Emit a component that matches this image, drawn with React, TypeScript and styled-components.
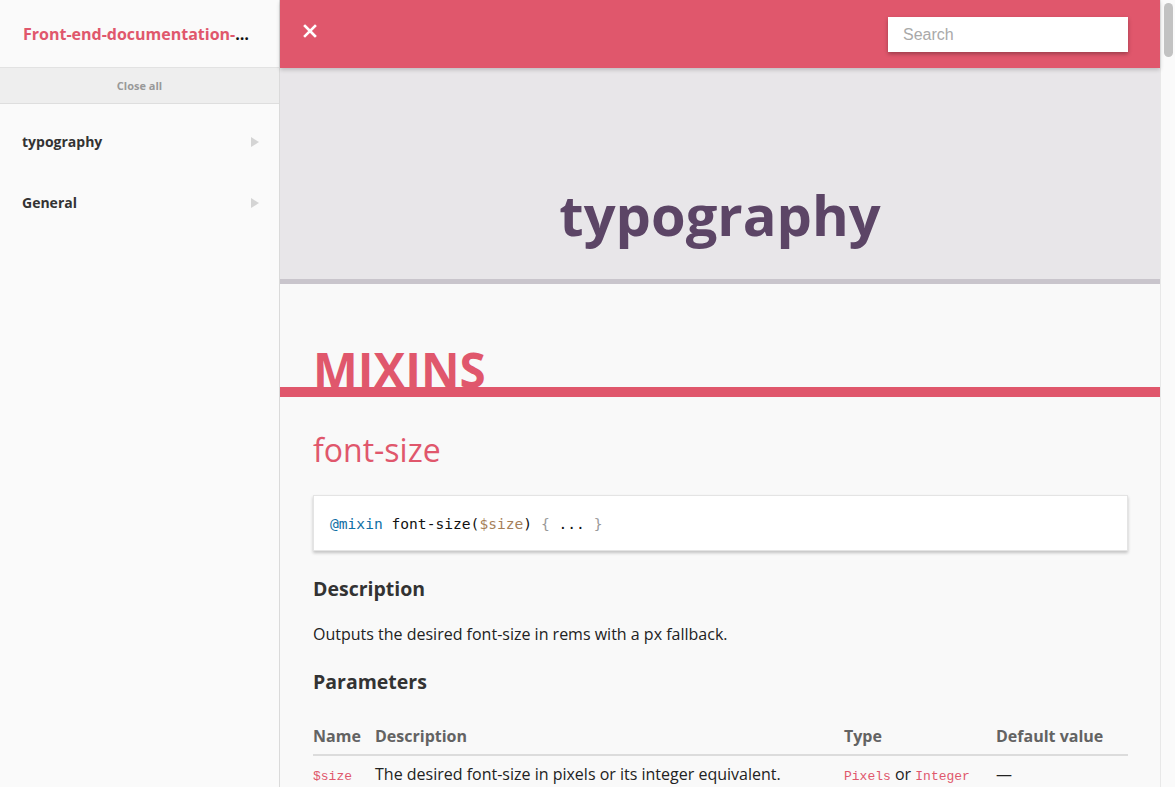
import * as React from 'react'
import styled, {createGlobalStyle} from 'styled-components'

const pink = '#e0576c'

const GlobalStyle = createGlobalStyle`
  html, body {
    margin: 0;
    padding: 0;
    height: 100%;
    overflow: hidden;
    background: #f9f9f9;
  }
  body {
    font-family: "Open Sans", "Noto Sans", sans-serif;
    color: #333;
  }
  * {
    box-sizing: border-box;
  }
`

const Layout = styled.div`
  display: flex;
  width: 1175px;
  height: 787px;
  overflow: hidden;
`

const Sidebar = styled.aside`
  width: 280px;
  flex-shrink: 0;
  background: #fafafa;
  border-right: 1px solid #dadada;
  display: flex;
  flex-direction: column;
`

const Brand = styled.header`
  height: 68px;
  padding: 0 24px 0 23px;
  border-bottom: 1px solid #e2e2e2;
  display: flex;
  align-items: center;
  font-size: 16px;
  font-weight: 700;
  color: #111;
  a {
    color: ${pink};
    text-decoration: none;
  }
`

const BrandText = styled.span`
  display: block;
  width: 100%;
  white-space: nowrap;
  overflow: hidden;
  text-overflow: ellipsis;
`

const CloseAll = styled.button`
  height: 36px;
  border: none;
  border-bottom: 1px solid #dedede;
  background: #eeeeee;
  font-family: "Open Sans", sans-serif;
  font-size: 11px;
  font-weight: 700;
  color: #999;
  text-align: center;
  padding: 0;
`

const NavList = styled.ul`
  list-style: none;
  margin: 0;
  padding: 7px 0 0;
`

const NavItem = styled.li`
  display: flex;
  align-items: center;
  justify-content: space-between;
  padding: 20px 22px 20px 22px;
  line-height: 21px;
  font-size: 14px;
  font-weight: 700;
  color: #333;
`

const Caret = styled.span`
  width: 0;
  height: 0;
  border-left: 8px solid #d4d4d4;
  border-top: 5px solid transparent;
  border-bottom: 5px solid transparent;
  margin-right: -2px;
`

const Main = styled.main`
  flex: 1;
  display: flex;
  flex-direction: column;
  min-width: 0;
  background: #f9f9f9;
`

const Topbar = styled.header`
  height: 68px;
  flex-shrink: 0;
  background: ${pink};
  box-shadow: 0 2px 4px rgba(0, 0, 0, 0.18);
  display: flex;
  align-items: center;
  justify-content: space-between;
  padding: 0 32px 0 23px;
  position: relative;
  z-index: 1;
`

const CloseButton = styled.button`
  background: none;
  border: none;
  padding: 0;
  width: 14px;
  height: 14px;
  display: flex;
  margin-top: -7px;
`

const SearchInput = styled.input`
  width: 240px;
  height: 35px;
  border: none;
  outline: none;
  padding: 2px 15px 0;
  background: #fff;
  box-shadow: 0 2px 4px rgba(0, 0, 0, 0.3);
  font-family: "Liberation Sans", Arial, sans-serif;
  font-size: 16px;
  color: #333;
  &::placeholder {
    color: #a9a9a9;
  }
`

const Banner = styled.div`
  height: 216px;
  flex-shrink: 0;
  background: #e8e6e9;
  border-bottom: 5px solid #c9c5cc;
  padding-top: 108px;
  text-align: center;
`

const BannerTitle = styled.h1`
  margin: 0;
  font-size: 56px;
  line-height: 76px;
  font-weight: 700;
  color: #5c4566;
`

const Content = styled.div`
  flex: 1;
  overflow: hidden;
`

const SectionTitle = styled.h2`
  margin: 68px 0 0;
  padding: 0 33px;
  font-size: 47.5px;
  line-height: 35px;
  font-weight: 700;
  color: ${pink};
  border-bottom: 10px solid ${pink};
`

const Item = styled.section`
  padding: 0 32px 0 33px;
`

const ItemTitle = styled.h3`
  margin: 31px 0 0;
  font-size: 32px;
  line-height: 43px;
  font-weight: 400;
  color: ${pink};
`

const CodeBlock = styled.pre`
  margin: 24px 0 0;
  height: 56px;
  padding: 0 16px;
  display: flex;
  align-items: center;
  background: #fff;
  border: 1px solid #e4e4e4;
  box-shadow: 0 2px 3px rgba(0, 0, 0, 0.22);
  font-family: "DejaVu Sans Mono", Menlo, monospace;
  font-size: 14.6px;
  color: #111;
`

const Token = styled.span<{$kind: 'keyword' | 'variable' | 'punct'}>`
  color: ${(p) =>
    p.$kind === 'keyword' ? '#0f6fa5' : p.$kind === 'variable' ? '#a67f59' : '#999'};
`

const Subtitle = styled.h4<{$gap: number}>`
  margin: ${(p) => p.$gap}px 0 0;
  font-size: 19.5px;
  line-height: 36px;
  font-weight: 700;
  color: #333;
`

const Paragraph = styled.p`
  margin: 16px 0 0;
  font-size: 16px;
  line-height: 22px;
  color: #222;
`

const ParamTable = styled.div`
  margin-top: 25px;
  display: grid;
  grid-template-columns: 62px 469px 152px 1fr;
`

const HeadCell = styled.div`
  font-size: 16px;
  font-weight: 700;
  color: #636363;
  line-height: 22px;
  padding-bottom: 7px;
  border-bottom: 2px solid #dcdcdc;
`

const Cell = styled.div`
  font-size: 16px;
  line-height: 22px;
  padding-top: 7px;
  color: #222;
  white-space: nowrap;
`

const Mono = styled.code`
  font-family: "Liberation Mono", "Courier New", monospace;
  font-size: 13px;
  color: ${pink};
`

const ScrollTrack = styled.div`
  width: 15px;
  flex-shrink: 0;
  background: #fafafa;
  border-left: 1px solid #e8e8e8;
  padding: 3px 2px 0 3px;
`

const ScrollThumb = styled.div`
  height: 54px;
  border-radius: 5px;
  background: #c2c2c2;
`

const CloseIcon = () => (
  <svg width="14" height="14" viewBox="0 0 14 14">
    <path d="M2 2 L12 12 M12 2 L2 12" stroke="#fff" strokeWidth="2.6" strokeLinecap="square" />
  </svg>
)

const App: React.FC = () => {
  return (
    <>
      <GlobalStyle />
      <Layout>
        <Sidebar>
          <Brand>
            <BrandText>
              <a href="#">Front-end-documentation-sassdoc</a>
            </BrandText>
          </Brand>
          <CloseAll>Close all</CloseAll>
          <NavList>
            <NavItem>
              typography
              <Caret />
            </NavItem>
            <NavItem>
              General
              <Caret />
            </NavItem>
          </NavList>
        </Sidebar>

        <Main>
          <Topbar>
            <CloseButton aria-label="Close sidebar">
              <CloseIcon />
            </CloseButton>
            <SearchInput placeholder="Search" />
          </Topbar>

          <Banner>
            <BannerTitle>typography</BannerTitle>
          </Banner>

          <Content>
            <SectionTitle>MIXINS</SectionTitle>
            <Item>
              <ItemTitle>font-size</ItemTitle>
              <CodeBlock>
                <Token $kind="keyword">@mixin</Token>&nbsp;font-size(
                <Token $kind="variable">$size</Token>)&nbsp;
                <Token $kind="punct">{'{'}</Token>&nbsp;...&nbsp;
                <Token $kind="punct">{'}'}</Token>
              </CodeBlock>

              <Subtitle $gap={20}>Description</Subtitle>
              <Paragraph>Outputs the desired font-size in rems with a px fallback.</Paragraph>

              <Subtitle $gap={19}>Parameters</Subtitle>
              <ParamTable>
                <HeadCell>Name</HeadCell>
                <HeadCell>Description</HeadCell>
                <HeadCell>Type</HeadCell>
                <HeadCell>Default value</HeadCell>

                <Cell>
                  <Mono>$size</Mono>
                </Cell>
                <Cell>The desired font-size in pixels or its integer equivalent.</Cell>
                <Cell>
                  <Mono>Pixels</Mono> or <Mono>Integer</Mono>
                </Cell>
                <Cell>—</Cell>
              </ParamTable>
            </Item>
          </Content>
        </Main>

        <ScrollTrack>
          <ScrollThumb />
        </ScrollTrack>
      </Layout>
    </>
  )
}

export default App
